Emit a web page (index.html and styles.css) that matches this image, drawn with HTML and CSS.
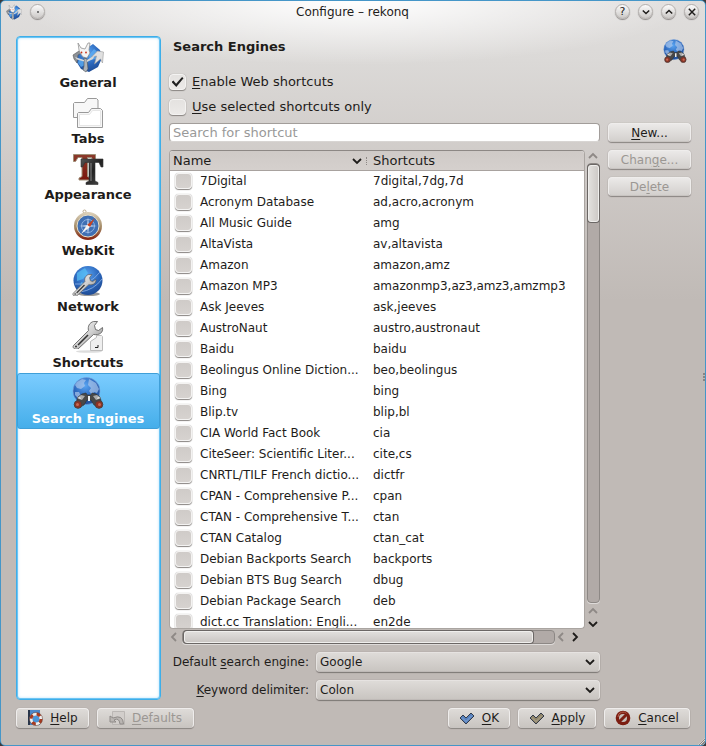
FILE: index.html
```html
<!DOCTYPE html>
<html lang="en">
<head>
<meta charset="utf-8">
<title>Configure – rekonq</title>
<link rel="stylesheet" href="styles.css">
</head>
<body>
<svg class="defs" aria-hidden="true">
  <defs>
    <radialGradient id="sea" cx=".45" cy=".3" r=".75"><stop offset="0" stop-color="#5aa5f2"/><stop offset=".55" stop-color="#2c68bd"/><stop offset="1" stop-color="#1d478f"/></radialGradient>
    <linearGradient id="steel" x1="0" y1="0" x2="1" y2="1"><stop offset="0" stop-color="#fafafa"/><stop offset=".5" stop-color="#d0d0d0"/><stop offset="1" stop-color="#777"/></linearGradient>
    <linearGradient id="red" x1="0" y1="0" x2="0" y2="1"><stop offset="0" stop-color="#8c3a2c"/><stop offset="1" stop-color="#7a160c"/></linearGradient>
    <linearGradient id="black" x1="0" y1="0" x2="1" y2="1"><stop offset="0" stop-color="#555"/><stop offset=".5" stop-color="#222"/><stop offset="1" stop-color="#4a4a4a"/></linearGradient>
    <linearGradient id="brass" x1="0" y1="0" x2="0" y2="1"><stop offset="0" stop-color="#d9cdb5"/><stop offset=".55" stop-color="#a38a66"/><stop offset="1" stop-color="#8a2a14"/></linearGradient>
    <symbol id="dragon" viewBox="0 0 32 32">
      <path d="M12 9l9-6 7 6 2 8-4 9-9 5-8-3-5-8 1-8z" fill="url(#sea)"/>
      <path d="M17 14l5-6 5 4-3 6-6 1zM7 18l4 1 2 5-4 2-3-4z" fill="#5fb0f5" opacity=".75"/>
      <path d="M1 14l6-4 3 2-4 2-1 8-3-4z" fill="#8d9196" stroke="#555" stroke-width=".6"/>
      <path d="M31.500 11l-6-1-6 6 5-1-2 8 6-5 2 4z" fill="#e0e0e0" stroke="#999" stroke-width=".6"/>
      <path d="M7 9L6 2l3 5 4 1 3-6 2 0-1 7 1 3-3 5-4-1-3-4z" fill="#f3f3f3" stroke="#888" stroke-width=".7"/>
      <path d="M12 17l3 1 1 10-2 3-3-2 1-4z" fill="#aeb3b8" stroke="#4c5258" stroke-width=".6"/>
      <path d="M3 16l9 3v1.500l-7-2zM15 19l8-5-2 4-6 3z" fill="#d4d7da"/>
      <circle cx="9.500" cy="11.500" r=".9" fill="#c63018"/><circle cx="14" cy="11.500" r=".9" fill="#c63018"/>
    </symbol>
    <symbol id="binoculars" viewBox="0 0 32 32">
      <circle cx="14.500" cy="14" r="13.500" fill="url(#sea)" stroke="#7aa0d8" stroke-width=".6"/>
      <path d="M5 5l5-3 4 1-2 3 1 3-4 3-4-1-2-3zM17 2l7 4 3 6-2 4-3-1-2 3-3-4 2-3-3-3zM3 15l4 0 2 4-3 2-3-3z" fill="#b5cdec" opacity=".65"/>
      <path d="M6 20l4-3 4-1 1 2h4l1-2 4 1 4 3 2 7-4 3-4-2-3-5h-4l-3 5-4 2-4-4z" fill="#484848" stroke="#2b2b2b" stroke-width=".6"/>
      <path d="M5 21l4-3 4 1-3 4-3-1zM29 21l-4-3-4 1 3 4 3-1z" fill="#aaa"/>
      <path d="M6 21l2-1 1 2zM28 21l-2-1-1 2zM16 19h2v5h-2z" fill="#eee"/>
      <circle cx="6" cy="27.500" r="3.800" fill="#8e3323" stroke="#4a4140"/><circle cx="27" cy="27.500" r="3.800" fill="#8e3323" stroke="#4a4140"/>
      <circle cx="5.500" cy="27.500" r="1.500" fill="#c56a55"/><circle cx="27.500" cy="27.500" r="1.500" fill="#c56a55"/>
    </symbol>
    <symbol id="chevron" viewBox="0 0 10 10"><path d="M1 3l4 4 4-4" fill="none" stroke="currentColor" stroke-width="1.800"/></symbol>
    <symbol id="wrench" viewBox="0 0 32 32">
      <path d="M1.500 28.500l15-15c-1-4 1-8 5-9l4 0-3 4 1 4 3 1 4-3c1 5-3 8-9 7L6 32c-3 1-6-1-4.500-3.500z" fill="url(#steel)" stroke="#555" stroke-width=".8"/>
      <path d="M6 28l10-10" stroke="#333" stroke-width="1.600"/><circle cx="4" cy="29.500" r="1" fill="#333"/>
    </symbol>
    <symbol id="tick" viewBox="0 0 16 16"><path d="M1 8l3-3 3 3 5-5 3 3-8 8z" fill="currentColor" stroke="#333b4a" stroke-linejoin="round"/><path d="M3 7.500l4 4 6-6" fill="none" stroke="#fff" stroke-opacity=".3"/></symbol>
  </defs>
</svg>
<div class="window">
  <header class="titlebar">
    <div class="title-left">
      <svg class="icon16"><use href="#dragon"/></svg>
      <button class="round" aria-label="Menu"><span class="dot"></span></button>
    </div>
    <h1 class="title">Configure – rekonq</h1>
    <div class="title-right">
      <button class="round" aria-label="Help">?</button>
      <button class="round" aria-label="Minimize"><svg class="chev"><use href="#chevron"/></svg></button>
      <button class="round" aria-label="Maximize"><svg class="chev up"><use href="#chevron"/></svg></button>
      <button class="round" aria-label="Close"><svg class="chev" viewBox="0 0 10 10"><path d="M1 1l8 8m0-8l-8 8" stroke="currentColor" stroke-width="1.800"/></svg></button>
    </div>
  </header>

  <main class="main">
    <nav class="sidebar">
      <a class="page" href="#general"><svg class="icon32"><use href="#dragon"/></svg>General</a>
      <a class="page" href="#tabs"><svg class="icon32" viewBox="0 0 32 32"><g fill="#f7f7f7" stroke="#999"><path d="M1.500 20.500v-14l1-1h10l3-4h9l1.500 1.500v17.500z"/><path d="M5.500 30.500v-14l1-1h10l3-4h9l2 2v17z"/></g><path d="M7.500 28.500v-11h10l3-4h8v15z" fill="#fff" stroke="#e6e6e6"/></svg>Tabs</a>
      <a class="page" href="#appearance"><svg class="icon32" viewBox="0 0 32 32"><path d="M1.500 1.500h22v7h-2l-2-4h-4v19l3 1.500v2H7v-2l3-1.500v-19H6l-2.500 4h-2z" fill="url(#red)" stroke="#a09078"/><path d="M9 6h22v8h-2l-2-4.500h-4V28l3 1.500v2H14v-2l3-1.500V9.500h-4L10.500 14H9z" fill="url(#black)" stroke="#333" stroke-width=".6"/><path d="M19 10v18" stroke="#888"/></svg>Appearance</a>
      <a class="page" href="#webkit"><svg class="icon32" viewBox="0 0 32 32"><circle cx="12.500" cy="2.500" r="1.500" fill="none" stroke="#bba98c"/><circle cx="16" cy="17" r="12.500" fill="#3f6fb3" stroke="url(#brass)" stroke-width="3"/><circle cx="16" cy="17" r="11" fill="none" stroke="#e8dfc9"/><circle cx="16" cy="17" r="6.500" fill="none" stroke="#8fb2e2"/><path d="M16 8l1 8 8 1-8 1-1 8-1-8-8-1 8-1z" fill="#bed3ee"/><path d="M23 9l-5 9-3-2z" fill="#c8431f"/><path d="M9 25l6-9 3 2z" fill="#f4f4f4"/></svg>WebKit</a>
      <a class="page" href="#network"><svg class="icon32" viewBox="0 0 32 32"><ellipse cx="17" cy="29" rx="11" ry="2" fill="#999"/><circle cx="16" cy="15.500" r="14.500" fill="url(#sea)"/><path d="M5 8l8-5 3 5-5 6-6 2zM9 17l6 2-3 5-4-1z" fill="#56c1f5" opacity=".7"/><path d="M3 19q14 2 25-12M8 27q14-2 22-13" fill="none" stroke="#8fb5ea" stroke-width=".8"/><use href="#wrench" width="25" height="25" x="0" y="6"/></svg>Network</a>
      <a class="page" href="#shortcuts"><svg class="icon32" viewBox="0 0 32 32"><ellipse cx="17" cy="30.500" rx="13" ry="1.300" fill="#ddd"/><path d="M18.500 20.500l6-4v-2h5l1 1v14h-12z" fill="#efefef" stroke="#bbb"/><path d="M26 24v2.500h-3" fill="none" stroke="#222"/><use href="#wrench" width="32" height="32" y="-4"/></svg>Shortcuts</a>
      <a class="page selected" href="#search" aria-current="page"><svg class="icon32"><use href="#binoculars"/></svg>Search Engines</a>
    </nav>

    <section class="content">
      <div class="heading">
        <h2>Search Engines</h2>
        <svg class="icon24"><use href="#binoculars"/></svg>
      </div>
      <div class="options">
        <label class="option"><input class="check" type="checkbox" checked><span><u>E</u>nable Web shortcuts</span></label>
        <label class="option"><input class="check" type="checkbox"><span><u>U</u>se selected shortcuts only</span></label>
      </div>
      <div class="middle">
        <div class="list-side">
          <input class="search" type="text" placeholder="Search for shortcut" aria-label="Search for shortcut">
          <div class="scroll-grid">
            <div class="frame">
              <table class="engines">
                <colgroup><col class="col-name"><col></colgroup>
                <thead><tr><th><span class="sort">Name<svg class="chev"><use href="#chevron"/></svg></span></th><th>Shortcuts</th></tr></thead>
                <tbody>
                  <tr><td><label><input class="check" type="checkbox">7Digital</label></td><td>7digital,7dg,7d</td></tr>
                  <tr><td><label><input class="check" type="checkbox">Acronym Database</label></td><td>ad,acro,acronym</td></tr>
                  <tr><td><label><input class="check" type="checkbox">All Music Guide</label></td><td>amg</td></tr>
                  <tr><td><label><input class="check" type="checkbox">AltaVista</label></td><td>av,altavista</td></tr>
                  <tr><td><label><input class="check" type="checkbox">Amazon</label></td><td>amazon,amz</td></tr>
                  <tr><td><label><input class="check" type="checkbox">Amazon MP3</label></td><td>amazonmp3,az3,amz3,amzmp3</td></tr>
                  <tr><td><label><input class="check" type="checkbox">Ask Jeeves</label></td><td>ask,jeeves</td></tr>
                  <tr><td><label><input class="check" type="checkbox">AustroNaut</label></td><td>austro,austronaut</td></tr>
                  <tr><td><label><input class="check" type="checkbox">Baidu</label></td><td>baidu</td></tr>
                  <tr><td><label><input class="check" type="checkbox">Beolingus Online Diction...</label></td><td>beo,beolingus</td></tr>
                  <tr><td><label><input class="check" type="checkbox">Bing</label></td><td>bing</td></tr>
                  <tr><td><label><input class="check" type="checkbox">Blip.tv</label></td><td>blip,bl</td></tr>
                  <tr><td><label><input class="check" type="checkbox">CIA World Fact Book</label></td><td>cia</td></tr>
                  <tr><td><label><input class="check" type="checkbox">CiteSeer: Scientific Liter...</label></td><td>cite,cs</td></tr>
                  <tr><td><label><input class="check" type="checkbox">CNRTL/TILF French dictio...</label></td><td>dictfr</td></tr>
                  <tr><td><label><input class="check" type="checkbox">CPAN - Comprehensive P...</label></td><td>cpan</td></tr>
                  <tr><td><label><input class="check" type="checkbox">CTAN - Comprehensive T...</label></td><td>ctan</td></tr>
                  <tr><td><label><input class="check" type="checkbox">CTAN Catalog</label></td><td>ctan_cat</td></tr>
                  <tr><td><label><input class="check" type="checkbox">Debian Backports Search</label></td><td>backports</td></tr>
                  <tr><td><label><input class="check" type="checkbox">Debian BTS Bug Search</label></td><td>dbug</td></tr>
                  <tr><td><label><input class="check" type="checkbox">Debian Package Search</label></td><td>deb</td></tr>
                  <tr><td><label><input class="check" type="checkbox">dict.cc Translation: Engli...</label></td><td>en2de</td></tr>
                </tbody>
              </table>
            </div>
            <div class="bar vertical">
              <svg class="chev up dim"><use href="#chevron"/></svg>
              <div class="track"><div class="thumb"></div></div>
              <svg class="chev up dim"><use href="#chevron"/></svg>
              <svg class="chev"><use href="#chevron"/></svg>
            </div>
            <div class="bar horizontal">
              <svg class="chev left dim"><use href="#chevron"/></svg>
              <div class="track"><div class="thumb"></div></div>
              <svg class="chev left dim"><use href="#chevron"/></svg>
              <svg class="chev right"><use href="#chevron"/></svg>
            </div>
          </div>
        </div>
        <div class="actions">
          <button class="btn"><span><u>N</u>ew...</span></button>
          <button class="btn" disabled><span>Chan<u>g</u>e...</span></button>
          <button class="btn" disabled><span>De<u>l</u>ete</span></button>
        </div>
      </div>
      <div class="form">
        <label for="engine">Default <u>s</u>earch engine:</label>
        <div class="combo"><select id="engine"><option>Google</option></select><svg class="chev"><use href="#chevron"/></svg></div>
        <label for="delimiter"><u>K</u>eyword delimiter:</label>
        <div class="combo"><select id="delimiter"><option>Colon</option></select><svg class="chev"><use href="#chevron"/></svg></div>
      </div>
    </section>
  </main>

  <footer class="footer">
    <button class="btn help"><svg class="icon16" viewBox="0 0 16 16"><path d="M1 0h12v15H1z" fill="#4b87c9"/><path d="M1 0h2v15H1z" fill="#29364a"/><circle cx="9" cy="9" r="5" fill="#4a95d8" stroke="#eee" stroke-width="3"/><circle cx="9" cy="9" r="5" fill="none" stroke="#a63a20" stroke-width="3" stroke-dasharray="3.930 3.930"/><circle cx="9" cy="9" r="6.600" fill="none" stroke="#5a3a34" stroke-width=".5"/></svg><span><u>H</u>elp</span></button>
    <button class="btn defaults" disabled><svg class="icon16" viewBox="0 0 16 16"><path d="M3.500 1.500h12v13h-12z" fill="#d2cecb" stroke="#bbb7b4"/><path d="M1 6v6h6L5 10q5-3 6 4h3.500Q14 4 4 8z" fill="#bab6b3" stroke="#8f8b88"/></svg><span><u>D</u>efaults</span></button>
    <span class="spacer"></span>
    <button class="btn ok"><svg class="icon16 blue"><use href="#tick"/></svg><span><u>O</u>K</span></button>
    <button class="btn apply"><svg class="icon16 olive"><use href="#tick"/></svg><span><u>A</u>pply</span></button>
    <button class="btn cancel"><svg class="icon16" viewBox="0 0 16 16"><circle cx="8" cy="8" r="7.300" fill="#7c1e12"/><path d="M3 7a5 5 0 0 1 9-3" fill="none" stroke="#b5604e"/><circle cx="8" cy="8" r="4" fill="#c5bfba"/><path d="M4 12l8-8" stroke="#7c1e12" stroke-width="3"/></svg><span><u>C</u>ancel</span></button>
  </footer>
  <span class="grip side"></span>
  <span class="grip corner"></span>
</div>
</body>
</html>
```

FILE: styles.css
```css
* { box-sizing: border-box; }

body {
  margin: 0;
  background: #3c3a3c;
  font: 13px/16px "DejaVu Sans", sans-serif;
  color: #1e1c1a;
}

.defs { position: absolute; width: 0; height: 0; }

.window {
  position: relative;
  display: flex;
  flex-direction: column;
  height: 100vh;
  overflow: hidden;
  border: 1px solid #4596c8;
  border-radius: 5px;
  background:
    radial-gradient(ellipse 340px 64px at 50% 0, #fff, rgba(255, 255, 255, 0)),
    linear-gradient(#e0dedd 0, #dbd9d7 60px, #cdc8c5 180px, #c0bab6 300px);
}

button, input, select { font: inherit; color: inherit; margin: 0; }
u { text-underline-offset: 2px; }

.icon16 { width: 16px; height: 16px; flex: none; }
.icon24 { width: 24px; height: 24px; }
.icon32 { width: 32px; height: 32px; flex: none; }
.chev { width: 10px; height: 10px; flex: none; display: block; }
.up { transform: rotate(180deg); }
.left { transform: rotate(90deg); }
.right { transform: rotate(-90deg); }
.dim { color: #8e8986; }

/* Title bar */
.titlebar {
  display: grid;
  grid-template-columns: 1fr auto 1fr;
  align-items: center;
  height: 22px;
  padding: 0 6px 1px 5px;
}
.title { margin: 0; font-size: 12px; line-height: 16px; font-weight: normal; }
.title-left, .title-right { display: flex; align-items: center; gap: 8px; }
.title-right { justify-content: flex-end; }
.round {
  display: grid;
  place-items: center;
  width: 15px;
  height: 15px;
  padding: 0;
  border: 1px solid #b3afad;
  border-radius: 50%;
  background: linear-gradient(#fbfbfb, #ccc9c7);
  box-shadow: 0 1px 1px #8c8886;
  font-size: 11px;
  line-height: 12px;
}
.round .chev { width: 8px; height: 8px; }
.dot { width: 2px; height: 2px; background: #777; }

.main {
  flex: 1;
  min-height: 0;
  display: grid;
  grid-template-columns: 145px 1fr;
  gap: 6px;
  padding: 13px 14px 0 15px;
}

/* Page list */
.sidebar {
  border: 1px solid #3daee9;
  border-radius: 4px;
  background: #fff;
  box-shadow: inset 0 0 0 1px #6cc4f3, inset 0 0 3px 1px #b5e3fb;
}
.page {
  display: flex;
  flex-direction: column;
  align-items: center;
  gap: 2px;
  height: 56px;
  padding: 4px 1px 0 0;
  color: inherit;
  font-weight: bold;
  text-decoration: none;
}
.page.selected {
  border: 1px solid #3f9fd8;
  border-radius: 3px;
  padding-top: 3px;
  background: linear-gradient(#7bccff, #45aeea);
  color: #fff;
}

/* Content */
.content { display: flex; flex-direction: column; min-height: 0; }
.heading {
  display: flex;
  justify-content: space-between;
  height: 37px;
  padding: 3px 4px 0 6px;
}
.heading h2 { margin: 0; font-size: 13px; line-height: 16px; }
.options { display: flex; flex-direction: column; gap: 7px; padding-left: 2px; }
.option { display: flex; align-items: center; gap: 6px; height: 18px; }

.check {
  appearance: none;
  flex: none;
  display: grid;
  place-items: center;
  width: 17px;
  height: 16px;
  border: 1px solid #f4f3f2;
  border-radius: 4px;
  background: linear-gradient(#e4e2e0, #eceae8);
  box-shadow: 0 1px 1px #8a8683, 0 0 1px #9a9693;
}
.check:checked::before {
  content: "";
  width: 12px;
  height: 10px;
  background: #222;
  clip-path: polygon(0 50%, 16% 36%, 38% 68%, 88% 0, 100% 12%, 40% 100%);
}

.middle {
  flex: 1;
  min-height: 0;
  display: grid;
  grid-template-columns: 1fr 83px;
  gap: 8px;
  padding: 7px 0 0 2px;
}
.list-side { display: flex; flex-direction: column; gap: 8px; min-height: 0; }
.search {
  height: 19px;
  padding: 0 3px;
  border: 1px solid #a29d9a;
  border-bottom-color: #d8d5d3;
  border-radius: 4px;
  background: #fff;
  outline: none;
}
.search::placeholder { color: #999; opacity: 1; }

.scroll-grid {
  flex: 1;
  min-height: 0;
  display: grid;
  grid-template-columns: 1fr 14px;
  grid-template-rows: 1fr 15px;
  column-gap: 1px;
}
.frame {
  overflow: hidden;
  border: 1px solid #aaa5a1;
  border-top-color: #8d8885;
  border-radius: 4px;
  background: #fff;
}
.engines { width: 100%; table-layout: fixed; border-collapse: collapse; }
.col-name { width: 200px; }
.engines th {
  height: 19px;
  padding: 1px 3px 0;
  background: linear-gradient(#cfcac7, #d5d0cd);
  border-bottom: 1px solid #a8a29f;
  font-weight: normal;
  text-align: left;
}
.sort { display: flex; align-items: center; justify-content: space-between; }
.sort::after {
  content: "";
  order: 2;
  height: 8px;
  margin-left: 4px;
  border-right: 1px dotted #8d8885;
}
.sort .chev { margin-left: auto; }
.engines td { height: 21px; padding: 0 3px; font-size: 12px; white-space: nowrap; }
.engines label { display: flex; align-items: center; gap: 8px; padding-left: 2px; }
.engines .check { background: linear-gradient(#cfcbc8, #d6d2cf); }

.bar { display: flex; align-items: center; }
.track {
  flex: 1;
  display: flex;
  border: 1px solid #8d8885;
  border-radius: 4px;
  background: #b1aaa7;
  box-shadow: 0 1px 0 #dedbd9;
}
.thumb { border: 1px solid #f0efed; border-radius: 3px; box-shadow: 0 0 0 1px #6b6765; }
.vertical { flex-direction: column; gap: 3px; }
.vertical > .chev:first-child { margin: 1px 0 -1px; }
.vertical .track { width: 13px; flex-direction: column; }
.vertical .thumb { height: 13%; margin: 1px 0; background: linear-gradient(90deg, #e2e0dd, #cecac7); }
.horizontal { padding-right: 5px; gap: 4px; }
.horizontal .track { height: 14px; margin: 0 -3px 0 0; }
.horizontal > .chev:first-child { margin-right: -1px; }
.horizontal .thumb { width: 94%; margin: 0 1px; background: linear-gradient(#e0dedc, #cbc7c4); }

/* Buttons */
.btn {
  display: flex;
  align-items: center;
  justify-content: center;
  gap: 7px;
  height: 19px;
  padding: 0;
  border: 1px solid #efedec;
  border-bottom-color: #c8c4c1;
  border-radius: 4px;
  background: linear-gradient(#ebe9e8, #d3d0cd);
  box-shadow: 0 1px 1px #8a8582, 0 0 1px #8f8a87;
  font-size: 12px;
}
.btn:disabled { color: #9b9793; }
.actions { display: flex; flex-direction: column; gap: 8px; }

.form {
  display: grid;
  grid-template-columns: 142px 1fr;
  gap: 8px 7px;
  align-items: center;
  padding: 8px 91px 0 0;
}
.form label { justify-self: end; font-size: 12px; white-space: nowrap; }
.combo { display: grid; grid-template-columns: 1fr 18px; align-items: center; }
.combo select {
  grid-area: 1 / 1 / 2 / 3;
  appearance: none;
  height: 20px;
  padding: 0 20px 0 3px;
  border: 1px solid #e6e3e1;
  border-bottom-color: #bfbab7;
  border-radius: 4px;
  background: linear-gradient(#dedbd8, #c9c5c1);
  box-shadow: 0 1px 1px #7d7875, 0 0 1px #807b78;
  font-size: 12px;
}
.combo .chev { grid-area: 1 / 2; pointer-events: none; z-index: 1; margin-left: 3px; }

.footer { display: flex; gap: 8px; padding: 8px 15px 17px; }
.footer .btn { height: 20px; background: linear-gradient(#dedbd8, #c9c5c1); }
.help { width: 73px; }
.defaults { width: 97px; }
.spacer { flex: 1; }
.ok { width: 62px; }
.apply { width: 78px; }
.cancel { width: 86px; }
.blue { color: #5580bd; }
.olive { color: #8f8468; }

/* Resize grips over the window edge */
.grip { position: absolute; pointer-events: none; }
.grip.side { right: 0; top: 50%; height: 8px; border-right: 2px dotted #8a8582; }
.grip.corner {
  right: 0;
  bottom: 0;
  width: 7px;
  height: 7px;
  background: repeating-linear-gradient(135deg, #dedbd9 0 1px, #8a8582 1px 2px);
  clip-path: polygon(100% 0, 100% 100%, 0 100%);
}
```
